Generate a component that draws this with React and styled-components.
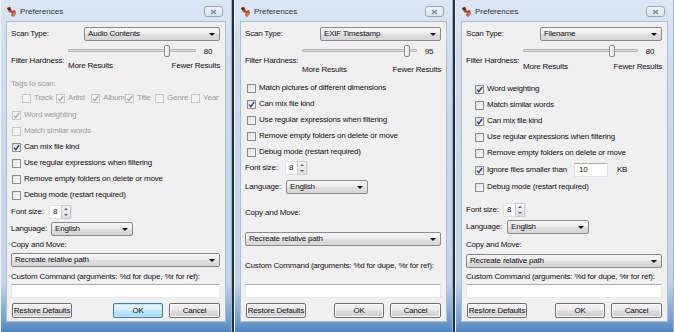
import React from "react";
import styled, { createGlobalStyle } from "styled-components";

const GlobalStyle = createGlobalStyle`
  html, body {
    margin: 0;
    padding: 0;
    background: #22313f;
  }
  body {
    font-family: "Liberation Sans", Arial, sans-serif;
  }
`;

const Desktop = styled.div`
  display: flex;
  gap: 2px;
  width: 674px;
  height: 332px;
  overflow: hidden;
  background: #22313f;
`;

const Window = styled.div`
  flex: none;
  width: ${(p) => p.$w}px;
  height: 332px;
  box-sizing: border-box;
  display: flex;
  flex-direction: column;
  padding: 0 6px 10px;
  background: linear-gradient(#dbe7f4 0%, #cddcee 20%, #c4d5ea 85%, #6f9bcc 97%, #4f83bf 100%);
  box-shadow: inset 1px 0 #eef4fb, inset -1px 0 #9fb4cc;
`;

const TitleBar = styled.div`
  height: 21px;
  flex: none;
  display: flex;
  align-items: center;
  padding-top: 2px;
  box-sizing: border-box;
`;

const TitleText = styled.span`
  margin-left: 3px;
  font-size: 8px;
  color: #2a3646;
  flex: 1;
`;

const CloseButton = styled.span`
  width: 19px;
  height: 11px;
  margin-right: 3px;
  box-sizing: border-box;
  display: flex;
  align-items: center;
  justify-content: center;
  border: 1px solid #98a9be;
  border-radius: 3px;
  background: linear-gradient(#f1f5fa, #d9e3ee);
`;

const Client = styled.div`
  flex: 1;
  display: flex;
  flex-direction: column;
  background: #f0f0f0;
  border: 1px solid #aebdd0;
  padding: 0 5px 0 4px;
`;

const Text = styled.span`
  font-size: 8px;
  line-height: 10px;
  letter-spacing: -0.2px;
  white-space: nowrap;
  color: ${(p) => (p.$disabled ? "#9c9c9c" : "#111111")};
`;

const Row = styled.div`
  display: flex;
  align-items: center;
  height: ${(p) => p.$h || 14}px;
  margin-top: ${(p) => p.$mt || 0}px;
  padding-left: ${(p) => p.$indent || 0}px;
  flex: none;
`;

const Label = styled(Text)`
  width: ${(p) => (p.$w ? `${p.$w}px` : "auto")};
  flex: none;
`;

const Select = styled.div`
  height: 14px;
  box-sizing: border-box;
  display: flex;
  align-items: center;
  justify-content: space-between;
  width: ${(p) => (p.$w ? `${p.$w}px` : "auto")};
  flex: ${(p) => (p.$w ? "none" : "1")};
  padding: 0 4px 0 3px;
  border: 1px solid #8b8b8b;
  border-radius: 2px;
  background: linear-gradient(#f5f5f5 0%, #ededed 48%, #e0e0e0 52%, #d6d6d6 100%);
`;

const Arrow = styled.span`
  width: 0;
  height: 0;
  border-left: 3px solid transparent;
  border-right: 3px solid transparent;
  border-top: 3px solid #111;
`;

const SliderBlock = styled.div`
  display: grid;
  grid-template-columns: 57px 1fr 24px;
  grid-template-rows: 13px auto;
  margin-top: 3px;
  flex: none;
`;

const HardnessLabel = styled(Text)`
  grid-column: 1;
  grid-row: 1 / span 2;
  align-self: start;
  margin-top: 12px;
`;

const Track = styled.div`
  grid-column: 2;
  grid-row: 1;
  align-self: center;
  position: relative;
  height: 3px;
  box-sizing: border-box;
  border: 1px solid #b3b3b3;
  border-radius: 1px;
  background: #e4e4e4;
`;

const Thumb = styled.span`
  position: absolute;
  top: -5px;
  width: 6px;
  height: 12px;
  box-sizing: border-box;
  border: 1px solid #8a8a8a;
  border-radius: 2px;
  background: linear-gradient(90deg, #ffffff, #e2e2e2);
`;

const SliderValue = styled(Text)`
  grid-column: 3;
  grid-row: 1;
  align-self: center;
  text-align: center;
  margin-top: 3px;
`;

const Ends = styled.div`
  grid-column: 2 / span 2;
  grid-row: 2;
  display: flex;
  justify-content: space-between;
  margin-top: ${(p) => p.$gap}px;
`;

const Box = styled.span`
  flex: none;
  width: 9px;
  height: 9px;
  box-sizing: border-box;
  display: flex;
  align-items: center;
  justify-content: center;
  border: 1px solid ${(p) => (p.$disabled ? "#c6c6c6" : "#8e8f8f")};
  background: ${(p) =>
    p.$disabled ? "#f4f4f4" : "linear-gradient(135deg, #dcdcdc, #ffffff)"};
  margin-right: 3px;
`;

const Tag = styled.div`
  display: flex;
  align-items: center;
  width: ${(p) => p.$w}px;
  flex: none;
`;

const SmallInput = styled.span`
  width: ${(p) => p.$w}px;
  height: 14px;
  box-sizing: border-box;
  display: flex;
  align-items: center;
  padding-left: 4px;
  margin: 0 ${(p) => p.$mr || 0}px 0 ${(p) => p.$ml || 0}px;
  background: #fff;
  border: 1px solid #e2e3ea;
  border-top-color: #abadb3;
`;

const Spin = styled.span`
  width: 23px;
  height: 14px;
  box-sizing: border-box;
  display: flex;
  align-items: center;
  justify-content: space-between;
  padding-left: 3px;
  background: #fff;
  border: 1px solid #e2e3ea;
`;

const SpinArrows = styled.span`
  width: 8px;
  height: 12px;
  display: flex;
  flex-direction: column;
  justify-content: space-around;
  align-items: center;
  border: 1px solid #c9c9c9;
  border-radius: 1px;
  background: linear-gradient(#f4f4f4, #dedede);
`;

const SpinTri = styled.span`
  width: 0;
  height: 0;
  border-left: 2px solid transparent;
  border-right: 2px solid transparent;
  ${(p) => (p.$up ? "border-bottom" : "border-top")}: 2px solid #4c607a;
`;

const FieldInput = styled.div`
  height: 14px;
  flex: none;
  box-sizing: border-box;
  margin-top: ${(p) => p.$mt || 0}px;
  background: #fff;
  border: 1px solid #e3e9ef;
  border-top-color: #abadb3;
`;

const ButtonRow = styled.div`
  display: flex;
  align-items: center;
  gap: 6px;
  margin-top: ${(p) => p.$mt}px;
  padding-left: 1px;
  flex: none;
`;

const Button = styled.span`
  height: 15px;
  width: ${(p) => p.$w}px;
  box-sizing: border-box;
  display: flex;
  align-items: center;
  justify-content: center;
  margin-left: ${(p) => (p.$push ? "auto" : "0")};
  font-size: 8px;
  letter-spacing: -0.2px;
  color: #111111;
  border: 1px solid ${(p) => (p.$default ? "#3c7fb1" : "#707070")};
  border-radius: 2px;
  background: ${(p) =>
    p.$default
      ? "linear-gradient(#eaf6fd 0%, #d9f0fc 48%, #bee6fd 52%, #a7d9f5 100%)"
      : "linear-gradient(#f2f2f2 0%, #ebebeb 48%, #dddddd 52%, #cfcfcf 100%)"};
  box-shadow: inset 0 0 0 1px ${(p) => (p.$default ? "#c4e5f6" : "#fcfcfc")};
`;

function AppIcon() {
  return (
    <svg width="11" height="12" viewBox="0 0 11 12">
      <path d="M1 2 L4 1 L6 5 L9 4 L10 7 L7 11 L5 9 L6 7 L3 6 Z" fill="#b2402a" />
      <path d="M1 2 L4 1 L5 4 L2 4 Z" fill="#6b2418" />
      <path d="M6 7 L9 6 L10 8 L7 11 Z" fill="#d9735a" />
    </svg>
  );
}

function CloseGlyph() {
  return (
    <svg width="7" height="6" viewBox="0 0 7 6">
      <path d="M1 1 L6 5 M6 1 L1 5" stroke="#7a8a9e" strokeWidth="1.6" />
    </svg>
  );
}

function Check({ checked, disabled }) {
  return (
    <Box $disabled={disabled}>
      {checked && (
        <svg width="7" height="7" viewBox="0 0 7 7">
          <path
            d="M1 3.6 L2.8 5.6 L6.2 1"
            fill="none"
            stroke={disabled ? "#a9a9a9" : "#2b3f86"}
            strokeWidth="1.4"
          />
        </svg>
      )}
    </Box>
  );
}

function Dropdown({ value, w }) {
  return (
    <Select $w={w}>
      <Text>{value}</Text>
      <Arrow />
    </Select>
  );
}

function Slider({ value, gap }) {
  return (
    <SliderBlock>
      <HardnessLabel>Filter Hardness:</HardnessLabel>
      <Track>
        <Thumb style={{ left: `calc((100% - 6px) * ${value / 100} - 1px)` }} />
      </Track>
      <SliderValue>{value}</SliderValue>
      <Ends $gap={gap}>
        <Text>More Results</Text>
        <Text>Fewer Results</Text>
      </Ends>
    </SliderBlock>
  );
}

function Dialog({ c }) {
  return (
    <Window $w={c.width}>
      <TitleBar>
        <AppIcon />
        <TitleText>Preferences</TitleText>
        <CloseButton>
          <CloseGlyph />
        </CloseButton>
      </TitleBar>
      <Client>
        <Row $mt={5}>
          <Label $w={c.scanLabel}>Scan Type:</Label>
          <Dropdown value={c.scan} />
        </Row>
        <Slider value={c.hardness} gap={c.endsGap} />
        {c.tags && (
          <>
            <Row $mt={6}>
              <Text $disabled>Tags to scan:</Text>
            </Row>
            <Row $indent={11}>
              {c.tags.map((t) => (
                <Tag key={t.name} $w={t.w}>
                  <Check checked={t.on} disabled />
                  <Text $disabled>{t.name}</Text>
                </Tag>
              ))}
            </Row>
          </>
        )}
        <div style={{ marginTop: c.checksMt }}>
          {c.checks.map((k) => (
            <Row key={k.label} $h={k.h || 16} $indent={c.checkIndent}>
              <Check checked={k.on} disabled={k.off} />
              <Text $disabled={k.off}>{k.label}</Text>
              {k.size && (
                <>
                  <SmallInput $w={34} $ml={7} $mr={9}>
                    <Text>{k.size}</Text>
                  </SmallInput>
                  <Text>KB</Text>
                </>
              )}
            </Row>
          ))}
        </div>
        <Row $mt={c.fontMt}>
          <Label $w={c.fontLabel}>Font size:</Label>
          <Spin>
            <Text>8</Text>
            <SpinArrows>
              <SpinTri $up />
              <SpinTri />
            </SpinArrows>
          </Spin>
        </Row>
        <Row $mt={c.langMt}>
          <Label $w={c.langLabel}>Language:</Label>
          <Dropdown value="English" w={82} />
        </Row>
        <Row $mt={c.copyMt}>
          <Text>Copy and Move:</Text>
        </Row>
        <Row $mt={c.ddMt}>
          <Dropdown value="Recreate relative path" />
        </Row>
        <Row $mt={c.customMt}>
          <Text>Custom Command (arguments: %d for dupe, %r for ref):</Text>
        </Row>
        <FieldInput $mt={c.inputMt} />
        <ButtonRow $mt={5}>
          <Button $w={60}>Restore Defaults</Button>
          <Button $w={50} $push $default={c.okDefault}>
            OK
          </Button>
          <Button $w={51}>Cancel</Button>
        </ButtonRow>
      </Client>
    </Window>
  );
}

const dialogs = [
  {
    width: 232,
    scan: "Audio Contents",
    scanLabel: 73,
    hardness: 80,
    endsGap: 4,
    tags: [
      { name: "Track", w: 34, on: false },
      { name: "Artist", w: 35, on: true },
      { name: "Album", w: 34, on: true },
      { name: "Title", w: 30, on: true },
      { name: "Genre", w: 36, on: false },
      { name: "Year", w: 30, on: false },
    ],
    checksMt: 2,
    checkIndent: 1,
    checks: [
      { label: "Word weighting", on: true, off: true },
      { label: "Match similar words", off: true },
      { label: "Can mix file kind", on: true },
      { label: "Use regular expressions when filtering" },
      { label: "Remove empty folders on delete or move" },
      { label: "Debug mode (restart required)" },
    ],
    fontLabel: 38,
    fontMt: 2,
    langLabel: 40,
    langMt: 3,
    copyMt: 2,
    ddMt: 1,
    customMt: 3,
    inputMt: 0,
    okDefault: true,
  },
  {
    width: 219,
    scan: "EXIF Timestamp",
    scanLabel: 75,
    hardness: 95,
    endsGap: 8,
    checksMt: 5,
    checkIndent: 2,
    checks: [
      { label: "Match pictures of different dimensions" },
      { label: "Can mix file kind", on: true },
      { label: "Use regular expressions when filtering" },
      { label: "Remove empty folders on delete or move" },
      { label: "Debug mode (restart required)" },
    ],
    fontLabel: 40,
    fontMt: 1,
    langLabel: 41,
    langMt: 5,
    copyMt: 12,
    ddMt: 12,
    customMt: 13,
    inputMt: 11,
  },
  {
    width: 219,
    scan: "Filename",
    scanLabel: 74,
    hardness: 80,
    endsGap: 5,
    checksMt: 9,
    checkIndent: 9,
    checks: [
      { label: "Word weighting", on: true },
      { label: "Match similar words" },
      { label: "Can mix file kind", on: true },
      { label: "Use regular expressions when filtering" },
      { label: "Remove empty folders on delete or move" },
      { label: "Ignore files smaller than", on: true, size: "10", h: 18 },
      { label: "Debug mode (restart required)" },
    ],
    fontLabel: 37,
    fontMt: 8,
    langLabel: 41,
    langMt: 3,
    copyMt: 4,
    ddMt: 2,
    customMt: 2,
    inputMt: 0,
  },
];

export default function App() {
  return (
    <>
      <GlobalStyle />
      <Desktop>
        {dialogs.map((c, i) => (
          <Dialog key={i} c={c} />
        ))}
      </Desktop>
    </>
  );
}
